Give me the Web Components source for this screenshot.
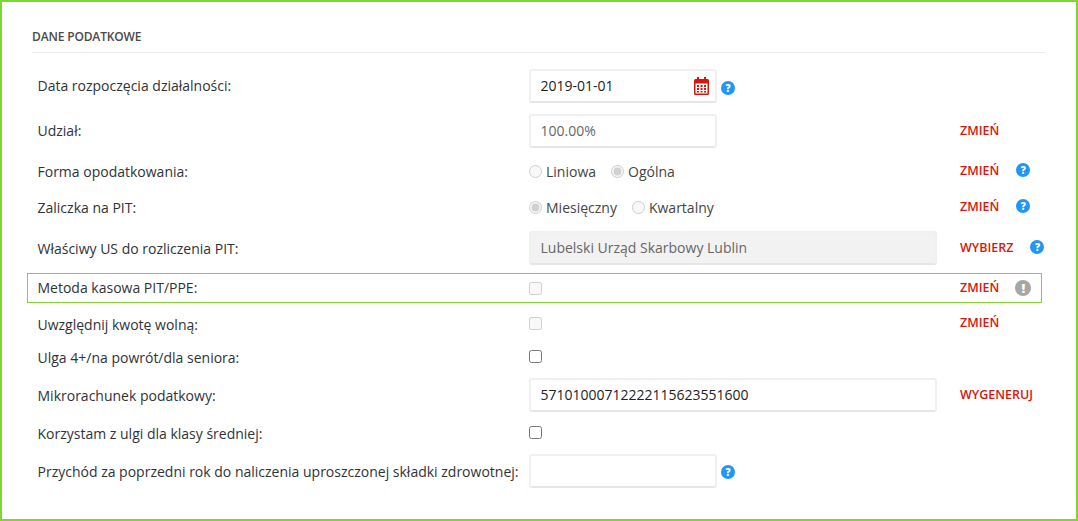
<!DOCTYPE html>
<html lang="pl">
<head>
<meta charset="utf-8">
<title>Dane podatkowe</title>
<style>
html,body{margin:0;padding:0;background:#fff;}
body{font-family:"Open Sans","Noto Sans",sans-serif;font-size:14px;color:#333;}
</style>
</head>
<body>
<tax-panel heading="DANE PODATKOWE">
  <tax-row h="34" label="Data rozpoczęcia działalności:">
    <tax-input w="188" value="2019-01-01" calendar></tax-input><tax-help dy="4"></tax-help>
  </tax-row>
  <tax-row h="34" gap="11" label="Udział:">
    <tax-input w="188" value="100.00%" muted></tax-input>
    <tax-action slot="action">ZMIEŃ</tax-action>
  </tax-row>
  <tax-row h="32" gap="7" ly="1" label="Forma opodatkowania:">
    <tax-radios a="Liniowa" b="Ogólna" on="b"></tax-radios>
    <tax-action slot="action">ZMIEŃ</tax-action><tax-help slot="action" dy="-2"></tax-help>
  </tax-row>
  <tax-row h="32" gap="4" ly="1" label="Zaliczka na PIT:">
    <tax-radios a="Miesięczny" b="Kwartalny" on="a"></tax-radios>
    <tax-action slot="action">ZMIEŃ</tax-action><tax-help slot="action" dy="-2"></tax-help>
  </tax-row>
  <tax-row h="34" gap="8" ly="1" label="Właściwy US do rozliczenia PIT:">
    <tax-input w="408" value="Lubelski Urząd Skarbowy Lublin" muted filled></tax-input>
    <tax-action slot="action">WYBIERZ</tax-action><tax-help slot="action" dy="-2"></tax-help>
  </tax-row>
  <tax-row h="30" gap="8" outlined label="Metoda kasowa PIT/PPE:">
    <tax-check disabled></tax-check>
    <tax-action slot="action">ZMIEŃ</tax-action><tax-help slot="action" kind="warn"></tax-help>
  </tax-row>
  <tax-row h="30" gap="5" ly="2" label="Uwzględnij kwotę wolną:">
    <tax-check disabled></tax-check>
    <tax-action slot="action">ZMIEŃ</tax-action>
  </tax-row>
  <tax-row h="30" gap="3" ly="2" label="Ulga 4+/na powrót/dla seniora:">
    <tax-check></tax-check>
  </tax-row>
  <tax-row h="34" gap="7" ly="1" label="Mikrorachunek podatkowy:">
    <tax-input w="408" value="57101000712222115623551600"></tax-input>
    <tax-action slot="action">WYGENERUJ</tax-action>
  </tax-row>
  <tax-row h="30" gap="5" ly="2" label="Korzystam z ulgi dla klasy średniej:">
    <tax-check></tax-check>
  </tax-row>
  <tax-row h="34" gap="7" ly="1" label="Przychód za poprzedni rok do naliczenia uproszczonej składki zdrowotnej:">
    <tax-input w="188" value=""></tax-input><tax-help dy="2"></tax-help>
  </tax-row>
</tax-panel>
<script>
function shadow(el, html){
  const r = el.attachShadow({mode:'open'});
  r.innerHTML = html;
  return r;
}
const esc = s => String(s == null ? '' : s).replace(/&/g,'&amp;').replace(/"/g,'&quot;').replace(/</g,'&lt;');

customElements.define('tax-panel', class extends HTMLElement{
  connectedCallback(){
    if(this.shadowRoot) return;
    shadow(this, `<style>
      :host{display:block;box-sizing:border-box;width:1078px;height:521px;border:2px solid #7ed62f;padding:27px 31px 0 25px;overflow:hidden;}
      h2{margin:0 0 16px 5px;height:24px;box-sizing:border-box;border-bottom:1px solid #ebebeb;font:600 12px/16px "Open Sans",sans-serif;letter-spacing:-.15px;color:#4a4a4a;width:1013px;}
      .rows{display:flex;flex-direction:column;}
    </style><h2>${esc(this.getAttribute('heading'))}</h2><div class="rows"><slot></slot></div>`);
  }
});

customElements.define('tax-row', class extends HTMLElement{
  connectedCallback(){
    if(this.shadowRoot) return;
    const h = this.getAttribute('h')||34, gap = this.getAttribute('gap')||0;
    const ly = Number(this.getAttribute('ly')||0);
    const out = this.hasAttribute('outlined');
    shadow(this, `<style>
      :host{display:grid;box-sizing:border-box;width:1015px;height:${h}px;margin-top:${gap}px;
        grid-template-columns:502px 431px 1fr;align-items:center;
        ${out?'outline:1px solid #7ed62f;outline-offset:-1px;':''}}
      .l{padding-left:10.500px;padding-top:${ly*2}px;white-space:nowrap;color:#2f3338;font-size:14px;line-height:20px;}
      .c{display:flex;align-items:center;gap:4px;height:100%;}
      .a{display:flex;align-items:center;gap:17px;height:100%;overflow:visible;white-space:nowrap;}
    </style><div class="l">${esc(this.getAttribute('label'))}</div><div class="c"><slot></slot></div><div class="a"><slot name="action"></slot></div>`);
  }
});

customElements.define('tax-input', class extends HTMLElement{
  connectedCallback(){
    if(this.shadowRoot) return;
    const w = this.getAttribute('w')||188;
    const muted = this.hasAttribute('muted'), filled = this.hasAttribute('filled');
    const cal = this.hasAttribute('calendar') ? `<svg width="15" height="18" viewBox="0 0 15 18" aria-hidden="true">
      <path fill="#d9150c" fill-rule="evenodd" d="M3 0h2v2h5V0h2v2h1.500A1.500 1.500 0 0 1 15 3.500v13a1.500 1.500 0 0 1-1.500 1.500h-12A1.500 1.500 0 0 1 0 16.500v-13A1.500 1.500 0 0 1 1.500 2H3zM1.500 6.500v10h12v-10z"/>
      <g fill="#d9150c"><rect x="3" y="8" width="2" height="2"/><rect x="6.500" y="8" width="2" height="2"/><rect x="10" y="8" width="2" height="2"/><rect x="3" y="11" width="2" height="2"/><rect x="6.500" y="11" width="2" height="2"/><rect x="10" y="11" width="2" height="2"/><rect x="3" y="14" width="2" height="1.500"/><rect x="6.500" y="14" width="2" height="1.500"/><rect x="10" y="14" width="2" height="1.500"/></g></svg>` : '';
    shadow(this, `<style>
      :host{display:flex;align-items:center;justify-content:space-between;box-sizing:border-box;width:${w}px;height:34px;
        border:2px solid #f0f0f0;border-bottom:2px solid #e6e6e6;border-radius:3px;padding:0 6px 0 9.500px;
        background:${filled?'#f2f2f2':'#fff'};color:${muted?'#666':'#222'};font-size:14px;line-height:20px;}
      svg{display:block;margin-top:-1px;}
    </style><span>${esc(this.getAttribute('value'))}</span>${cal}`);
  }
});

customElements.define('tax-help', class extends HTMLElement{
  connectedCallback(){
    if(this.shadowRoot) return;
    const warn = this.getAttribute('kind')==='warn';
    const s = warn?16:14, fill = warn?'#a6a6a6':'#2196f3', t = warn?'!':'?';
    const dy = this.getAttribute('dy')||0;
    shadow(this, `<style>
      :host{display:block;box-sizing:border-box;width:${s}px;height:${s}px;flex:none;margin-top:${dy}px;${warn?'margin-left:-1px;':''}
        border-radius:50%;background:${fill};color:#fff;text-align:center;
        font:800 ${warn?13:10}px/${s}px "Open Sans",sans-serif;}
    </style>${t}`);
  }
});

customElements.define('tax-action', class extends HTMLElement{
  connectedCallback(){
    if(this.shadowRoot) return;
    shadow(this, `<style>
      :host{display:block;color:#d9150c;font-size:12.500px;font-weight:600;line-height:16px;margin-top:0;}
    </style><slot></slot>`);
  }
});

customElements.define('tax-radios', class extends HTMLElement{
  connectedCallback(){
    if(this.shadowRoot) return;
    const a = this.getAttribute('a'), b = this.getAttribute('b'), on = this.getAttribute('on');
    shadow(this, `<style>
      :host{display:flex;align-items:center;gap:15px;color:#444;font-size:14px;}
      label{display:flex;align-items:center;gap:4px;}
      input{margin:0;width:13px;height:13px;}
    </style>
    <label><input type="radio" name="r" disabled ${on==='a'?'checked':''}><span>${esc(a)}</span></label>
    <label><input type="radio" name="r" disabled ${on==='b'?'checked':''}><span>${esc(b)}</span></label>`);
  }
});

customElements.define('tax-check', class extends HTMLElement{
  connectedCallback(){
    if(this.shadowRoot) return;
    shadow(this, `<style>
      :host{display:block;height:13px;}
      input{display:block;margin:0;width:13px;height:13px;}
    </style><input type="checkbox" ${this.hasAttribute('disabled')?'disabled':''}>`);
  }
});
</script>
</body>
</html>
